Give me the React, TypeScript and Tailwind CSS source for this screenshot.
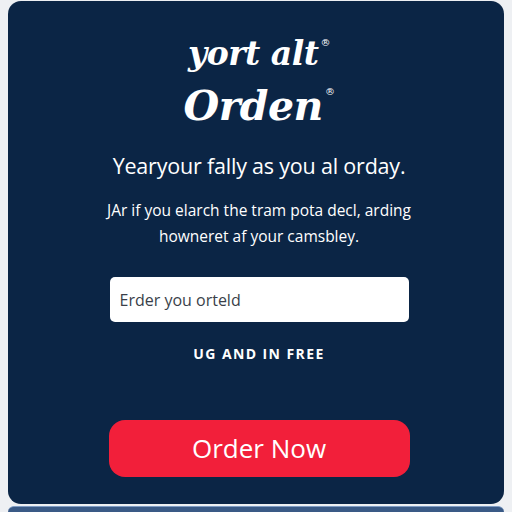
export default function App() {
  return (
    <div className="w-[512px] h-[512px] bg-[#eef0f3] overflow-hidden flex flex-col">
      <div className="mx-[8px] mt-[1px] h-[505px] rounded-[13px] bg-[#0b2545] flex flex-col items-center pl-[6px]">
        {/* brand */}
        <div
          className="mt-[35px] text-white italic font-bold text-[33px] leading-[36px] tracking-[-0.5px]"
          style={{ fontFamily: '"DejaVu Serif", serif' }}
        >
          yort alt<sup className="text-[10px] not-italic font-normal ml-[2px] align-[14px]">®</sup>
        </div>
        <div
          className="mt-[10px] text-white italic font-bold text-[41px] leading-[48px] tracking-[-0.5px]"
          style={{ fontFamily: '"DejaVu Serif", serif' }}
        >
          Orden<sup className="text-[10px] not-italic font-normal ml-[2px] align-[20px]">®</sup>
        </div>

        <div style={{ fontFamily: '"Open Sans", sans-serif' }} className="flex flex-col items-center">
          <p className="mt-[21px] text-white text-[21.5px] leading-[30px] tracking-[-0.2px]">
            Yearyour fally as you al orday.
          </p>
          <p className="mt-[16px] text-white text-[15.5px] leading-[26px] text-center w-[320px]">
            JAr if you elarch the tram pota decl, arding
            <br />
            howneret af your camsbley.
          </p>

          <div className="mt-[28px] w-[299px] h-[45px] bg-white rounded-[5px] flex items-center px-[10px]">
            <span className="text-[#3a3f4a] text-[16px]">Erder you orteld</span>
          </div>

          <div className="mt-[21px] text-white font-bold text-[14px] tracking-[1.4px]">
            UG AND IN FREE
          </div>

          <button className="mt-[56px] w-[301px] h-[57px] rounded-[16px] bg-[#f21f3a] text-white text-[26px] flex items-center justify-center">
            Order Now
          </button>
        </div>
      </div>
      <div className="mx-[8px] mt-[2px] h-[6px] rounded-t-[6px] bg-[#3a5a86] border-t border-[#7f9cc4]" />
    </div>
  );
}
